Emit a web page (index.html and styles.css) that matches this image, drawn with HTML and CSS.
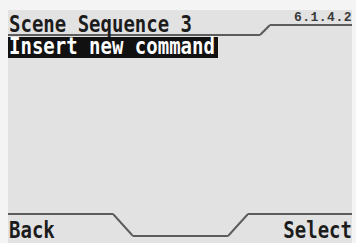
FILE: index.html
```html
<!DOCTYPE html>
<html lang="en">
<head>
    <meta charset="UTF-8">
    <title>Scene Sequence 3</title>
    <link rel="stylesheet" href="styles.css">
</head>
<body>
    <div class="screen">
        <!-- Header tab -->
        <div class="header">
            <div class="title"><span class="lcd">Scene Sequence 3</span></div>
            <svg class="slant" width="10" height="26" viewBox="0 0 10 26">
                <line x1="0" y1="25" x2="10" y2="15" stroke="#5c5c5c" stroke-width="2"/>
            </svg>
            <div class="version">6.1.4.2</div>
        </div>

        <!-- Menu -->
        <div class="menu">
            <div class="item selected"><span class="lcd">Insert new command</span></div>
        </div>

        <!-- Soft keys -->
        <div class="footer">
            <div class="key key-left"><span class="lcd">Back</span></div>
            <svg class="slant" width="20" height="24" viewBox="0 0 20 24">
                <line x1="0" y1="1" x2="20" y2="23" stroke="#5c5c5c" stroke-width="2"/>
            </svg>
            <div class="key-mid"></div>
            <svg class="slant" width="20" height="24" viewBox="0 0 20 24">
                <line x1="0" y1="23" x2="20" y2="1" stroke="#5c5c5c" stroke-width="2"/>
            </svg>
            <div class="key key-right"><span class="lcd">Select</span></div>
        </div>
    </div>
</body>
</html>
```

FILE: styles.css
```css
body {
    margin: 0;
    background: #f4f4f4;
    font-family: 'DejaVu Sans Mono', monospace;
    color: #1c1c1c;
}

.screen {
    margin: 10px 4px 0 8px;
    height: 233px;
    background: #e2e2e2;
    display: flex;
    flex-direction: column;
}

/* tall, narrow LCD lettering */
.lcd {
    display: inline-block;
    font-size: 19px;
    font-weight: bold;
    line-height: 17px;
    transform: scaleY(1.2);
}

.header {
    display: flex;
    align-items: flex-start;
    height: 26px;
}

.title {
    width: 252px;
    height: 26px;
    box-sizing: border-box;
    border-bottom: 2px solid #5c5c5c;
    padding: 5.5px 0 0 1px;
}

.slant {
    display: block;
    flex: none;
}

.version {
    flex: 1;
    height: 16px;
    box-sizing: border-box;
    border-bottom: 2px solid #5c5c5c;
    font-family: 'Liberation Mono', monospace;
    font-weight: bold;
    font-size: 13px;
    letter-spacing: 0.5px;
    line-height: 15px;
    text-align: right;
    color: #3a3a3a;
}

.menu {
    flex: 1;
    padding-top: 1px;
}

.item {
    height: 21px;
    line-height: 21px;
}

.item.selected {
    width: fit-content;
    padding: 0 3px 0 1px;
    background: #111;
    color: #fff;
}

.footer {
    display: flex;
    align-items: flex-start;
    height: 30px;
}

.key {
    height: 30px;
    box-sizing: border-box;
    border-top: 2px solid #5c5c5c;
    padding-top: 6.5px;
}

.key-left {
    width: 105px;
    padding-left: 1px;
}

.key-mid {
    width: 95px;
    height: 24px;
    box-sizing: border-box;
    border-bottom: 2px solid #5c5c5c;
}

.key-right {
    flex: 1;
    text-align: right;
}
```
